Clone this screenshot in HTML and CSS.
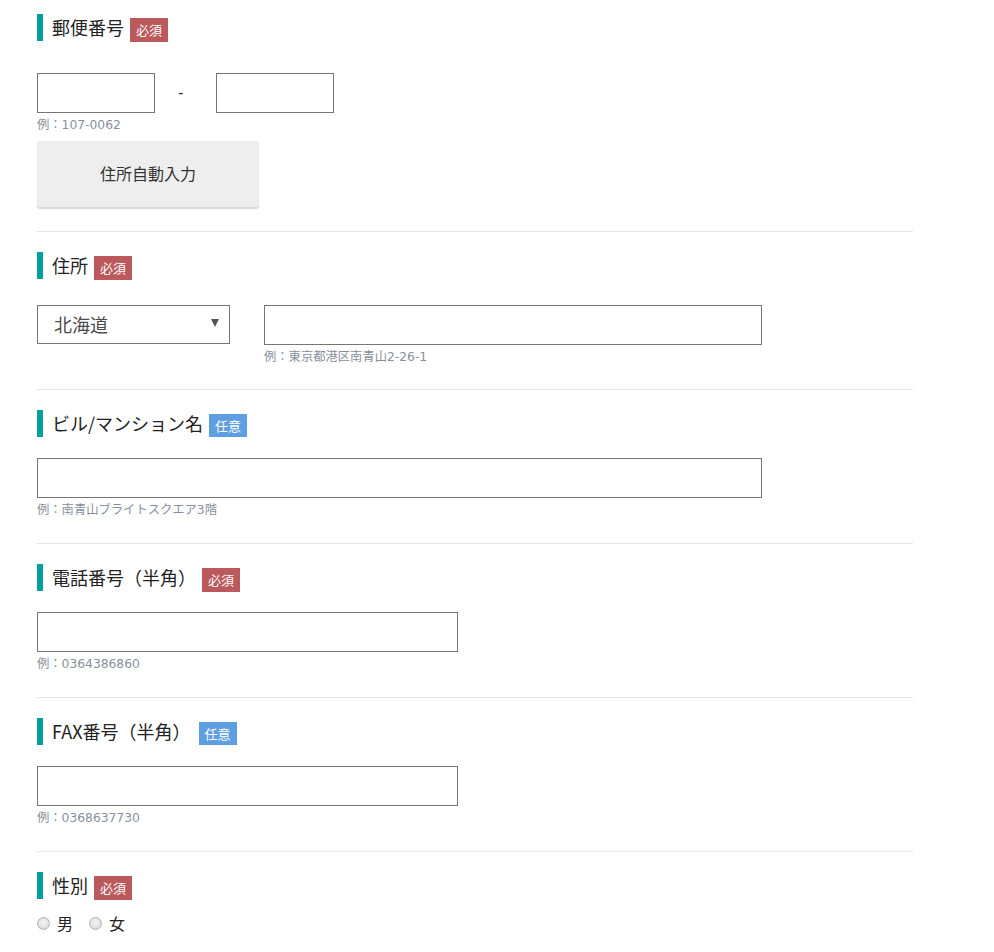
FILE: index.html
```html
<!DOCTYPE html>
<html lang="ja">
<head>
<meta charset="utf-8">
<title>フォーム</title>
<link rel="stylesheet" href="styles.css">
</head>
<body>
<div class="form">
  <section class="field field--first">
    <div class="field__head"><h2 class="field__title">郵便番号</h2><span class="badge badge--req">必須</span></div>
    <div class="zip field__body--zip">
      <input class="input input--zip" type="text">
      <span class="zip__dash">-</span>
      <input class="input input--zip" type="text">
    </div>
    <p class="hint">例：107-0062</p>
    <button class="btn-auto" type="button">住所自動入力</button>
  </section>

  <section class="field field--addr">
    <div class="field__head"><h2 class="field__title">住所</h2><span class="badge badge--req">必須</span></div>
    <div class="addr field__body--addr">
      <div class="select">
        <select class="select__control"><option>北海道</option></select>
      </div>
      <div class="addr__col">
        <input class="input input--addr" type="text">
        <p class="hint">例：東京都港区南青山2-26-1</p>
      </div>
    </div>
  </section>

  <section class="field">
    <div class="field__head"><h2 class="field__title">ビル/マンション名</h2><span class="badge badge--opt">任意</span></div>
    <div class="field__body">
      <input class="input input--wide" type="text">
      <p class="hint">例：南青山ブライトスクエア3階</p>
    </div>
  </section>

  <section class="field">
    <div class="field__head"><h2 class="field__title">電話番号（半角）</h2><span class="badge badge--req">必須</span></div>
    <div class="field__body">
      <input class="input input--mid" type="text">
      <p class="hint">例：0364386860</p>
    </div>
  </section>

  <section class="field">
    <div class="field__head"><h2 class="field__title">FAX番号（半角）</h2><span class="badge badge--opt badge--far">任意</span></div>
    <div class="field__body">
      <input class="input input--mid" type="text">
      <p class="hint">例：0368637730</p>
    </div>
  </section>

  <section class="field field--last">
    <div class="field__head"><h2 class="field__title">性別</h2><span class="badge badge--req">必須</span></div>
    <div class="radios">
      <label class="radio"><input class="radio__input" type="radio" name="sex"><span class="radio__label">男</span></label>
      <label class="radio"><input class="radio__input" type="radio" name="sex"><span class="radio__label">女</span></label>
    </div>
  </section>
</div>
</body>
</html>
```

FILE: styles.css
```css
html, body {
  margin: 0;
  padding: 0;
  background: #fff;
}

body {
  font-family: "Noto Sans CJK JP", "Noto Sans", sans-serif;
  color: #222;
}

.form {
  width: 876px;
  margin-left: 37px;
}

.field {
  display: flex;
  flex-direction: column;
  align-items: flex-start;
  padding: 20px 0 24px;
  border-bottom: 1px solid #e6e6e6;
}

.field--first {
  padding-top: 14px;
  padding-bottom: 24px;
}

.field--addr {
  padding-bottom: 23px;
}

.field--last {
  border-bottom: none;
}

.field__head {
  display: flex;
  align-items: flex-start;
  height: 28px;
}

.field__title {
  margin: 0;
  border-left: 6px solid #00a09f;
  padding-left: 9px;
  font-size: 18px;
  font-weight: normal;
  line-height: 27px;
  height: 27px;
  color: #222;
}

.badge {
  margin-left: 6px;
  margin-top: 4px;
  height: 24px;
  padding: 0 6px;
  font-size: 13px;
  line-height: 24px;
  color: #fff;
  white-space: nowrap;
}

.badge--req {
  background: #bb595c;
}

.badge--opt {
  background: #5e9fe1;
  height: 23px;
  line-height: 23px;
}

.badge--far {
  margin-left: 8px;
}

.field__body {
  margin-top: 20px;
  display: flex;
  flex-direction: column;
}

.input {
  box-sizing: border-box;
  height: 40px;
  margin: 0;
  padding: 0 10px;
  border: 1px solid #767676;
  border-radius: 0;
  background: #fff;
  font-family: inherit;
  font-size: 16px;
  outline: none;
}

.input--zip { width: 118px; }
.input--addr { width: 498px; }
.input--wide { width: 725px; }
.input--mid { width: 421px; }

.hint {
  margin: 3px 0 0;
  font-family: "DejaVu Sans", "Noto Sans CJK JP", sans-serif;
  font-size: 12.3px;
  line-height: 18px;
  color: #87909c;
}

/* zip */
.zip {
  display: flex;
  align-items: center;
}

.field__body--zip {
  margin-top: 31px;
}

.zip__dash {
  box-sizing: border-box;
  width: 61px;
  padding-left: 23px;
  font-family: "DejaVu Sans", sans-serif;
  font-size: 15px;
  line-height: 40px;
  color: #333;
}

.btn-auto {
  margin-top: 7px;
  width: 222px;
  height: 66px;
  padding: 0 0 3px;
  border: none;
  border-radius: 3px;
  background: #eeeeee;
  box-shadow: 0 2px 1px #d9d9d9;
  font-family: inherit;
  font-size: 16px;
  color: #333;
  cursor: pointer;
}

/* address */
.addr {
  display: flex;
  align-items: flex-start;
  gap: 34px;
}

.field__body--addr {
  margin-top: 25px;
}

.addr__col {
  display: flex;
  flex-direction: column;
}

.select {
  position: relative;
  width: 193px;
  height: 39px;
}

.select::after {
  content: "";
  position: absolute;
  right: 11px;
  top: 14px;
  border-left: 4px solid transparent;
  border-right: 4px solid transparent;
  border-top: 8px solid #555;
  pointer-events: none;
}

.select__control {
  -webkit-appearance: none;
  appearance: none;
  box-sizing: border-box;
  width: 193px;
  height: 39px;
  margin: 0;
  padding: 0 0 2px 16px;
  border: 1px solid #767676;
  border-radius: 0;
  background: #fff;
  font-family: inherit;
  font-size: 18px;
  color: #4a4a4a;
  outline: none;
}

/* radios */
.radios {
  margin-top: 12px;
  display: flex;
  gap: 16px;
}

.radio {
  display: flex;
  align-items: center;
  height: 22px;
}

.radio__input {
  -webkit-appearance: none;
  appearance: none;
  box-sizing: border-box;
  width: 13px;
  height: 13px;
  margin: 0;
  border: 1px solid #b3b3b3;
  border-radius: 50%;
  background: radial-gradient(circle at 50% 40%, #f4f4f4 0%, #e2e2e2 55%, #cfcfcf 100%);
}

.radio__label {
  margin-left: 7px;
  font-size: 16px;
  line-height: 22px;
  color: #222;
}
```
